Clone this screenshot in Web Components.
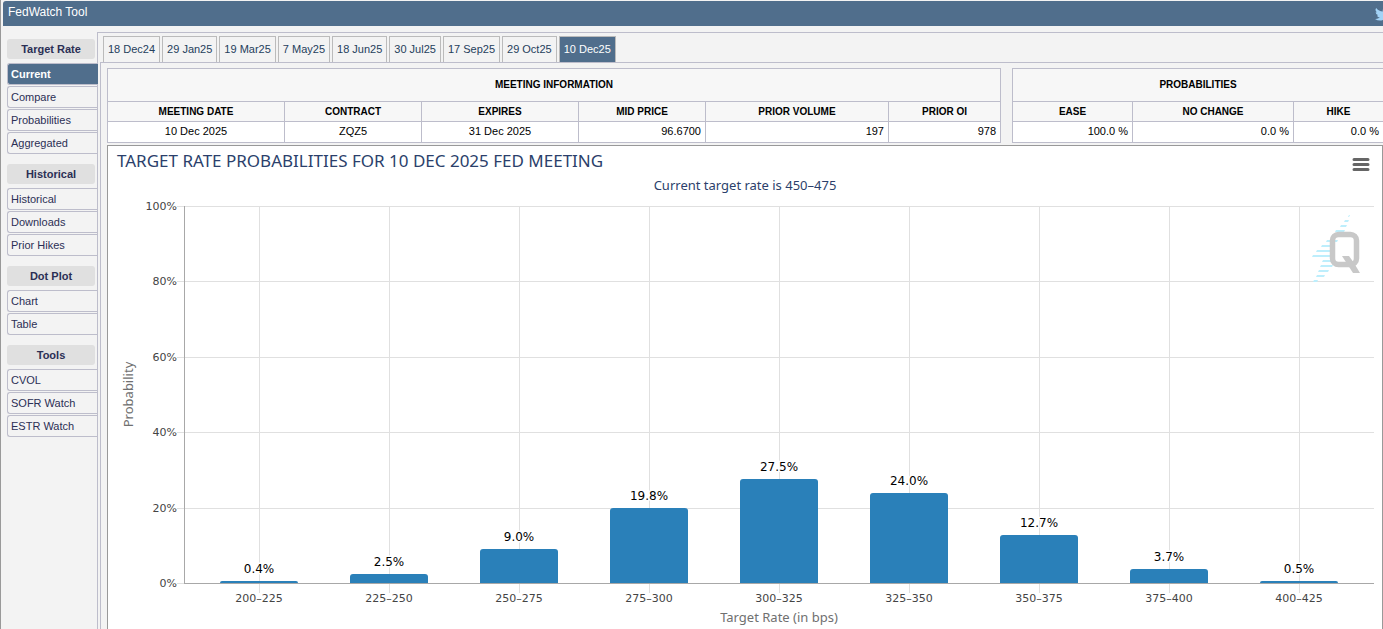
<!DOCTYPE html>
<html lang="en">
<head>
<meta charset="utf-8">
<title>FedWatch Tool</title>
<style>
    body {
        margin: 0;
        background: #f3f3f3;
        font-family: "Liberation Sans", Arial, sans-serif;
        font-size: 11px;
        overflow: hidden;
    }
</style>
</head>
<body>
<fedwatch-app></fedwatch-app>

<script>
const MEETINGS = ["18 Dec24", "29 Jan25", "19 Mar25", "7 May25", "18 Jun25", "30 Jul25", "17 Sep25", "29 Oct25", "10 Dec25"];

const MENU = [
    { title: "Target Rate", items: ["Current", "Compare", "Probabilities", "Aggregated"] },
    { title: "Historical", items: ["Historical", "Downloads", "Prior Hikes"] },
    { title: "Dot Plot", items: ["Chart", "Table"] },
    { title: "Tools", items: ["CVOL", "SOFR Watch", "ESTR Watch"] }
];

const MEETING_INFO = {
    caption: "MEETING INFORMATION",
    columns: [
        { name: "MEETING DATE", value: "10 Dec 2025", width: 177 },
        { name: "CONTRACT", value: "ZQZ5", width: 137 },
        { name: "EXPIRES", value: "31 Dec 2025", width: 157 },
        { name: "MID PRICE", value: "96.6700", width: 127, number: true },
        { name: "PRIOR VOLUME", value: "197", width: 183, number: true },
        { name: "PRIOR OI", value: "978", width: 112, number: true }
    ]
};

const PROBABILITIES = {
    caption: "PROBABILITIES",
    columns: [
        { name: "EASE", value: "100.0 %", width: 120, number: true },
        { name: "NO CHANGE", value: "0.0 %", width: 161, number: true },
        { name: "HIKE", value: "0.0 %", width: 90, number: true }
    ]
};

const RATES = [
    ["200–225", 0.4], ["225–250", 2.5], ["250–275", 9.0],
    ["275–300", 19.8], ["300–325", 27.5], ["325–350", 24.0],
    ["350–375", 12.7], ["375–400", 3.7], ["400–425", 0.5]
];

class ToolHeader extends HTMLElement {
    constructor() {
        super();
        this.attachShadow({ mode: "open" }).innerHTML = `
        <style>
            :host {
                display: flex;
                justify-content: space-between;
                height: 25px;
                margin-left: 2px;
                background: #506e8c;
                border-radius: 3px 0 0 0;
                color: #fff;
                overflow: hidden;
            }
            h1 {
                margin: 0;
                padding: 0 5px;
                font-size: 12px;
                font-weight: normal;
                line-height: 22px;
            }
            a {
                flex: none;
                width: 8px;
                padding-top: 6px;
                overflow: hidden;
            }
            svg {
                display: block;
            }
        </style>
        <h1><slot></slot></h1>
        <a href="#" aria-label="Twitter">
            <svg width="16" height="14" viewBox="0 0 24 20">
                <path fill="#a3d3f7" d="M24 2.4a10 10 0 0 1-2.8.8A5 5 0 0 0 23.3.5a10 10 0 0 1-3.1 1.2A4.9 4.9 0 0 0 11.8 6.2 14 14 0 0 1 1.7 1a4.9 4.9 0 0 0 1.5 6.6 4.9 4.9 0 0 1-2.2-.6 4.9 4.9 0 0 0 3.9 4.9 4.9 4.9 0 0 1-2.2.1 4.9 4.9 0 0 0 4.6 3.4A9.9 9.9 0 0 1 0 17.5 14 14 0 0 0 21.5 5 10 10 0 0 0 24 2.4z"/>
            </svg>
        </a>
        `;
    }
}

class SideMenu extends HTMLElement {
    constructor() {
        super();
        this.attachShadow({ mode: "open" });
    }

    set groups(groups) {
        this._groups = groups;
        this.render();
    }

    render() {
        this.shadowRoot.innerHTML = `
        <style>
            :host {
                display: block;
                padding: 13px 0 0 6px;
            }
            section {
                margin-bottom: 10px;
            }
            h2 {
                margin: 0 2px 4px 0;
                border-radius: 3px;
                background: #e0e0e0;
                color: #2b2f55;
                font-size: 11px;
                line-height: 20px;
                text-align: center;
            }
            ul {
                display: grid;
                gap: 1px;
                margin: 0;
                padding: 0;
                list-style: none;
            }
            a {
                display: block;
                padding-left: 3px;
                border: 1px solid #bdbdcb;
                border-right: 0;
                border-radius: 3px 0 0 3px;
                color: #2b2f55;
                line-height: 20px;
                text-decoration: none;
            }
            a.active {
                margin-right: -1px;
                position: relative;
                background: #506e8c;
                color: #fff;
                font-weight: bold;
            }
        </style>
        ${this._groups.map(group => `
            <section>
                <h2>${group.title}</h2>
                <ul>
                    ${group.items.map(item => `<li><a href="#"${item === "Current" ? ' class="active"' : ""}>${item}</a></li>`).join("")}
                </ul>
            </section>
        `).join("")}
        `;
    }
}

class MeetingTabs extends HTMLElement {
    constructor() {
        super();
        this.attachShadow({ mode: "open" });
    }

    set meetings(meetings) {
        this._meetings = meetings;
        this.render();
    }

    render() {
        const last = this._meetings.length - 1;
        this.shadowRoot.innerHTML = `
        <style>
            :host {
                display: flex;
                gap: 2px;
                padding: 3px 2px 0 5px;
            }
            button {
                height: 26px;
                padding: 0 4px 2px;
                border: 1px solid #bbb;
                border-bottom: 0;
                background: none;
                color: #25405c;
                font: inherit;
                white-space: nowrap;
            }
            button.active {
                background: #506e8c;
                color: #fff;
            }
        </style>
        ${this._meetings.map((name, i) => `<button type="button"${i === last ? ' class="active"' : ""}>${name}</button>`).join("")}
        `;
    }
}

class InfoTable extends HTMLElement {
    constructor() {
        super();
        this.attachShadow({ mode: "open" });
    }

    set info(info) {
        this._info = info;
        this.render();
    }

    render() {
        const { caption, columns } = this._info;
        const total = columns.reduce((sum, column) => sum + column.width, 0);
        this.shadowRoot.innerHTML = `
        <style>
            :host {
                display: block;
            }
            table {
                width: 100%;
                table-layout: fixed;
                border-collapse: collapse;
                background: #fff;
                color: #000;
            }
            th, td {
                height: 20px;
                padding: 0 4px;
                border: 1px solid #bdbdcb;
                box-sizing: border-box;
                text-align: center;
            }
            th {
                background: #f7f7f7;
                font-size: 10px;
            }
            .caption th {
                height: 33px;
                padding-bottom: 2px;
            }
            td {
                height: 21px;
                padding-bottom: 2px;
            }
            td.number {
                text-align: right;
            }
        </style>
        <table>
            <colgroup>
                ${columns.map(column => `<col style="width: ${column.width / total * 100}%">`).join("")}
            </colgroup>
            <thead>
                <tr class="caption"><th colspan="${columns.length}">${caption}</th></tr>
                <tr>${columns.map(column => `<th>${column.name}</th>`).join("")}</tr>
            </thead>
            <tbody>
                <tr>${columns.map(column => `<td${column.number ? ' class="number"' : ""}>${column.value}</td>`).join("")}</tr>
            </tbody>
        </table>
        `;
    }
}

class RateChart extends HTMLElement {
    constructor() {
        super();
        this.attachShadow({ mode: "open" }).innerHTML = `
        <style>
            :host {
                display: block;
                position: relative;
                border: 1px solid #999;
                background: #fff;
                font-family: "Noto Sans", sans-serif;
            }
            svg {
                display: block;
            }
            .plot {
                width: 100%;
                height: 500px;
            }
            .title {
                font-size: 17px;
                fill: #2b3f6b;
            }
            .subtitle {
                font-size: 13px;
                fill: #2b3f6b;
            }
            .axis-title {
                font-size: 13px;
                fill: #707070;
            }
            .label {
                font-family: "DejaVu Sans", sans-serif;
                font-size: 11px;
                fill: #444;
            }
            .value {
                font-family: "DejaVu Sans", sans-serif;
                font-size: 12px;
                fill: #000;
                stroke: #fff;
                stroke-width: 3px;
                stroke-linejoin: round;
                paint-order: stroke;
            }
            .middle {
                text-anchor: middle;
            }
            .end {
                text-anchor: end;
            }
            .grid {
                stroke: #e0e0e0;
            }
            .axis {
                stroke: #a8a8a8;
            }
            .bar {
                fill: #2a80b9;
            }
            .menu {
                position: absolute;
                top: 6px;
                right: 8px;
                width: 26px;
                height: 24px;
                padding: 4px;
                border: 0;
                background: none;
            }
        </style>
        <svg class="plot" role="img" aria-label="Target rate probabilities"></svg>
        <button class="menu" type="button" aria-label="Chart menu">
            <svg width="18" height="16">
                <path d="M2 3.5H16M2 8.5H16M2 13.5H16" stroke="#666" stroke-width="3" stroke-linecap="round"/>
            </svg>
        </button>
        `;
    }

    connectedCallback() {
        this.render();
        window.addEventListener("resize", () => this.render());
    }

    render() {
        const svg = this.shadowRoot.querySelector(".plot");
        const width = svg.clientWidth;
        const left = 76;
        const right = width - 8;
        const top = 60;
        const bottom = 437;
        const inset = 10;
        const step = (right - left - inset * 2) / RATES.length;
        const barWidth = Math.round(step * 0.6);
        const toY = value => Math.round(bottom - (bottom - top) * value / 100);
        const toX = i => Math.floor(left + inset + step * (i + 0.5));

        let grid = "";
        let labels = "";
        for (let value = 0; value <= 100; value += 20) {
            const y = toY(value);
            grid += `<path class="grid" d="M${left - 7} ${y + 0.5}H${right}"/>`;
            labels += `<text class="label end" x="${left - 7}" y="${y + 4}">${value}%</text>`;
        }

        let bars = "";
        RATES.forEach(([name, value], i) => {
            const x = toX(i);
            const y = toY(value);
            const h = bottom - y;
            const r = Math.min(3, h);
            const x0 = x - barWidth / 2;
            grid += `<path class="grid" d="M${x + 0.5} ${top}V${bottom + 10}"/>`;
            bars += `<path class="bar" d="M${x0} ${bottom}v${r - h}q0 ${-r} ${r} ${-r}h${barWidth - r * 2}q${r} 0 ${r} ${r}v${h - r}z"/>`;
            labels += `<text class="label middle" x="${x}" y="${bottom + 19}">${name}</text>`;
            labels += `<text class="value middle" x="${x}" y="${y - 8}">${value.toFixed(1)}%</text>`;
        });

        svg.innerHTML = `
            ${grid}
            ${this.watermark(right - 62, top + 10)}
            ${bars}
            <path class="axis" d="M${left + 0.5} ${top}V${bottom}M${left} ${bottom + 0.5}H${right}"/>
            ${labels}
            <text class="title" x="9" y="21">TARGET RATE PROBABILITIES FOR 10 DEC 2025 FED MEETING</text>
            <text class="subtitle middle" x="${width / 2}" y="44">Current target rate is 450–475</text>
            <text class="axis-title middle" x="${(left + right) / 2}" y="${bottom + 39}">Target Rate (in bps)</text>
            <text class="axis-title middle" transform="translate(25 ${(top + bottom) / 2}) rotate(-90)">Probability</text>
        `;
    }

    // slanted speed lines behind a square Q
    watermark(x, y) {
        const lines = [
            [36, 37, 1], [32, 36, 6], [28, 34, 11], [23, 32, 16], [19, 30, 21], [14, 25, 26], [9, 20, 31], [4, 20, 36],
            [0, 20, 41], [10, 20, 46], [8, 20, 51], [6, 16, 56], [4, 12, 61], [1, 5, 66]
        ];
        return `
            <g transform="translate(${x} ${y})">
                <path fill="#bdeefc" d="${lines.map(([a, b, h]) => `M${a} ${h}L${a + 1} ${h - 2}H${b + 1}L${b} ${h}z`).join("")}"/>
                <rect x="20.5" y="18.5" width="24" height="30" rx="6" fill="none" stroke="#c8c8c8" stroke-width="5.5"/>
                <path fill="#c8c8c8" d="M30 40H37L42 47L48 57H41z"/>
            </g>
        `;
    }
}

class FedwatchApp extends HTMLElement {
    constructor() {
        super();
        this.attachShadow({ mode: "open" }).innerHTML = `
        <style>
            :host {
                display: block;
                min-height: 100vh;
                padding-top: 1px;
                border-left: 1px solid #999;
                box-sizing: border-box;
            }
            .layout {
                display: grid;
                grid-template-columns: 96px minmax(0, 1fr);
            }
            main {
                margin-top: 6px;
                border: 1px solid #bdbdcb;
                border-width: 1px 0 0 1px;
            }
            .content {
                margin-left: 2px;
                padding: 5px 0 0 6px;
                border: 1px solid #bdbdcb;
                border-width: 1px 0 0 1px;
            }
            .tables {
                display: grid;
                grid-template-columns: 894fr 372fr;
                gap: 11px;
                margin: 0 -1px 2px 0;
            }
        </style>
        <tool-header>FedWatch Tool</tool-header>
        <div class="layout">
            <side-menu></side-menu>
            <main>
                <meeting-tabs></meeting-tabs>
                <div class="content">
                    <div class="tables">
                        <info-table id="meeting"></info-table>
                        <info-table id="probabilities"></info-table>
                    </div>
                    <rate-chart></rate-chart>
                </div>
            </main>
        </div>
        `;
    }

    connectedCallback() {
        const root = this.shadowRoot;
        root.querySelector("side-menu").groups = MENU;
        root.querySelector("meeting-tabs").meetings = MEETINGS;
        root.querySelector("#meeting").info = MEETING_INFO;
        root.querySelector("#probabilities").info = PROBABILITIES;
    }
}

customElements.define("tool-header", ToolHeader);
customElements.define("side-menu", SideMenu);
customElements.define("meeting-tabs", MeetingTabs);
customElements.define("info-table", InfoTable);
customElements.define("rate-chart", RateChart);
customElements.define("fedwatch-app", FedwatchApp);
</script>
</body>
</html>
